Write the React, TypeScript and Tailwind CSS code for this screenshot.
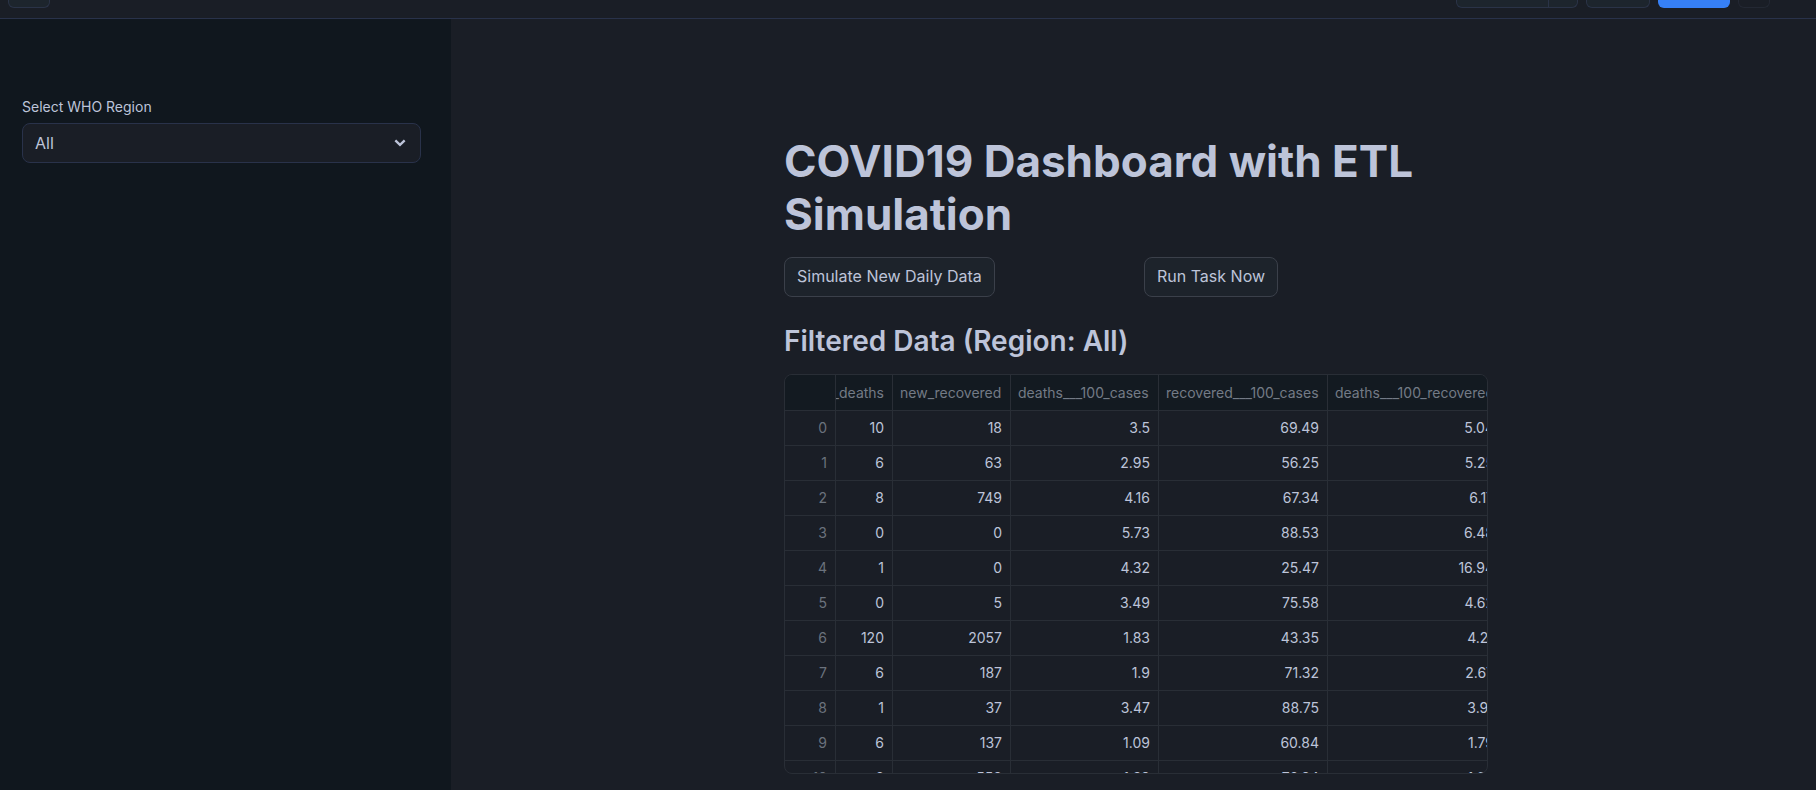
const headers = ["new_deaths", "new_recovered", "deaths___100_cases", "recovered___100_cases", "deaths___100_recovered"];

const rows = [
  ["10", "18", "3.5", "69.49", "5.04"],
  ["6", "63", "2.95", "56.25", "5.25"],
  ["8", "749", "4.16", "67.34", "6.17"],
  ["0", "0", "5.73", "88.53", "6.48"],
  ["1", "0", "4.32", "25.47", "16.94"],
  ["0", "5", "3.49", "75.58", "4.62"],
  ["120", "2057", "1.83", "43.35", "4.21"],
  ["6", "187", "1.9", "71.32", "2.67"],
  ["1", "37", "3.47", "88.75", "3.91"],
  ["6", "137", "1.09", "60.84", "1.79"],
  ["6", "558", "1.39", "76.34", "1.82"],
];

function Toolbar() {
  return (
    <header className="flex h-[19px] shrink-0 items-start justify-between overflow-hidden border-b border-[#29324a] bg-[#1a1e26] pl-2 pr-[46px]">
      <button aria-label="Menu" className="h-2 w-[42px] rounded-b-md border border-t-0 border-[#2a3347] bg-[#1d252d]" />
      <div className="flex gap-2">
        <div className="flex">
          <button aria-label="Open" className="h-2 w-[93px] rounded-bl-md border border-t-0 border-[#2a3347] bg-[#1d252d]" />
          <button aria-label="More options" className="h-2 w-[29px] rounded-br-md border border-l-0 border-t-0 border-[#2a3347] bg-[#1d252d]" />
        </div>
        <button aria-label="Share" className="h-2 w-16 rounded-b-md border border-t-0 border-[#2a3347] bg-[#1d252d]" />
        <button aria-label="Run" className="h-2 w-[72px] rounded-b-md bg-[#3680f6]" />
        <button aria-label="Account" className="h-2 w-8 rounded-b-md border border-t-0 border-[#232833] bg-[#1a1e26]" />
      </div>
    </header>
  );
}

function Sidebar() {
  return (
    <aside className="w-[451px] shrink-0 bg-[#10171e] pl-[22px] pr-[30px] pt-[77px]">
      <label htmlFor="region" className="block text-sm leading-[22px] text-[#bdc4d9]">
        Select WHO Region
      </label>
      <div className="relative mt-[5px]">
        <select
          id="region"
          defaultValue="All"
          className="h-10 w-full appearance-none rounded-lg border border-[#29324a] bg-[#1a1e26] px-3 text-base text-[#bdc4d9]"
        >
          <option>All</option>
        </select>
        <svg
          viewBox="0 0 24 24"
          className="pointer-events-none absolute right-[11px] top-2.5 size-5"
          fill="none"
          stroke="#bdc4d9"
          strokeWidth="2.8"
        >
          <path d="M6.4 8.8 L12 14.2 L17.6 8.8" />
        </svg>
      </div>
    </aside>
  );
}

function DataTable() {
  return (
    <div className="h-[400px] overflow-hidden rounded-lg border border-[#292e36]">
      <table className="w-[718px] table-fixed border-separate border-spacing-0 text-sm text-[#bdc4d9]">
        <colgroup>
          <col className="w-[51px]" />
          <col className="w-[57px]" />
          <col className="w-[118px]" />
          <col className="w-[148px]" />
          <col className="w-[169px]" />
          <col className="w-[175px]" />
        </colgroup>
        <thead>
          <tr className="h-9 bg-[#131a21] text-[#737b86]">
            <th className="border-b border-r border-[#292e36]" />
            {headers.map((h, i) => (
              <th key={h} className="overflow-hidden border-b border-r border-[#292e36] p-0 font-normal">
                <div className={i === 0 ? "flex justify-end pr-2" : "flex pl-[7px]"}>{h}</div>
              </th>
            ))}
          </tr>
        </thead>
        <tbody>
          {rows.map((row, i) => (
            <tr key={i} className="h-[35px]">
              <th className="border-b border-r border-[#292e36] p-0 pr-2 text-right font-normal text-[#6b727d]">{i}</th>
              {row.map((value, j) => (
                <td key={j} className="border-b border-r border-[#292e36] p-0 pr-2 text-right">
                  {value}
                </td>
              ))}
            </tr>
          ))}
        </tbody>
      </table>
    </div>
  );
}

const actionButton =
  "h-10 rounded-lg border border-[#3b404a] bg-[#1d232b] px-3 pb-0.5 text-base text-[#bdc4d9]";

export default function App() {
  return (
    <div className="flex h-screen flex-col overflow-hidden bg-[#1a1e26] font-['Inter',sans-serif] text-[#bdc4d9]">
      <Toolbar />
      <div className="flex min-h-0 flex-1">
        <Sidebar />
        <main className="min-w-0 flex-1 overflow-hidden pl-[5px] pt-[116px]">
          <div className="mx-auto max-w-[704px]">
            <h1 className="text-[44px] font-bold leading-[53px]">COVID19 Dashboard with ETL Simulation</h1>
            <div className="mt-4 grid grid-cols-2 gap-4">
              <div>
                <button className={actionButton}>Simulate New Daily Data</button>
              </div>
              <div>
                <button className={actionButton}>Run Task Now</button>
              </div>
            </div>
            <h2 className="mb-4 mt-[27px] text-[28px] font-semibold leading-[34px]">Filtered Data (Region: All)</h2>
            <DataTable />
          </div>
        </main>
      </div>
    </div>
  );
}
